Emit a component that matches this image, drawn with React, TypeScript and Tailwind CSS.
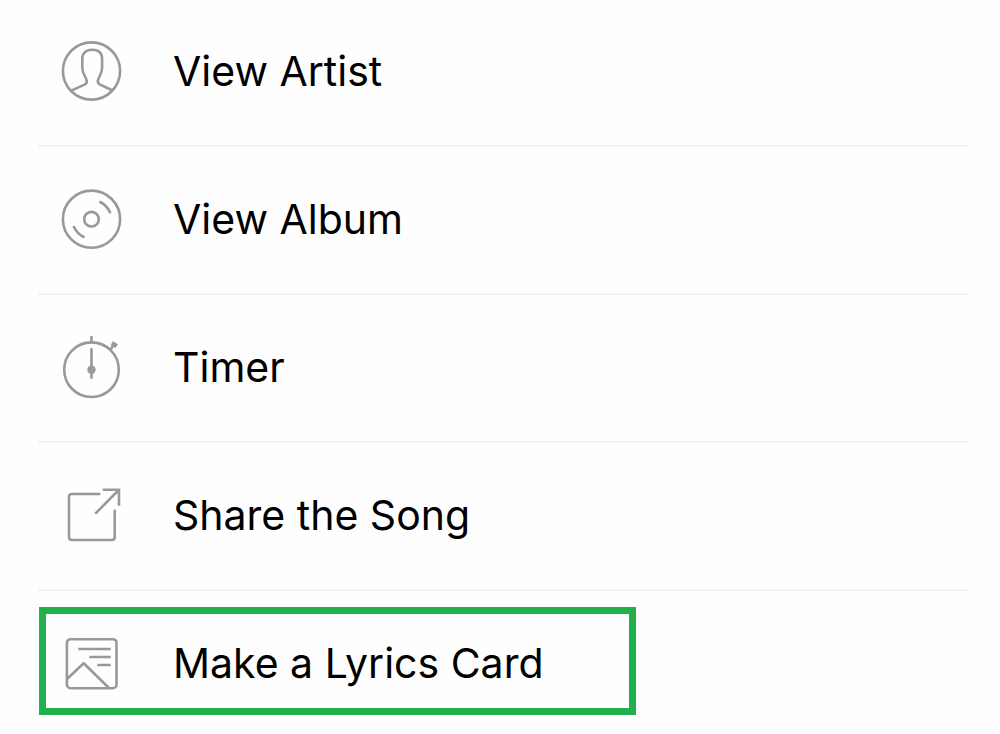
import type { ReactNode } from "react";
import { clsx } from "clsx";

interface MenuItem {
  label: string;
  icon: ReactNode;
  highlighted?: boolean;
}

const menuItems: MenuItem[] = [
  {
    label: "View Artist",
    icon: (
      <>
        <circle cx="31.5" cy="32" r="28.6" />
        <path d="M11.8 51.4 25 45.4Q27.4 44.2 26.6 41.4C25.8 37 22.6 35.4 22.3 29V20C22.3 14 26 10.7 32.2 10.7S42.1 14 42.1 20V29C41.8 35.4 38.8 37 38 41.4Q37.3 44.2 39.7 45.4L52 51.2" />
      </>
    ),
  },
  {
    label: "View Album",
    icon: (
      <>
        <circle cx="31.5" cy="32.2" r="28.6" />
        <circle cx="31.5" cy="32.2" r="7.3" />
        <path d="M40.3 15Q47 18.5 50 25.3M14 40Q17.2 46.8 23.6 50" />
      </>
    ),
  },
  {
    label: "Timer",
    icon: (
      <>
        <circle cx="31.5" cy="34.7" r="27.3" />
        <path d="M31.5 2V7M31.5 14.3V42.7M50.8 14.3 53 11" />
        <path d="M51.8 8.2 56.8 11.2" strokeWidth="4.4" strokeLinecap="butt" />
        <circle cx="31.5" cy="34.7" r="4.2" fill="currentColor" stroke="none" />
      </>
    ),
  },
  {
    label: "Share the Song",
    icon: (
      <>
        <path d="M39.3 11H12Q9 11 9 14V54Q9 57 12 57H51.7Q54.7 57 54.7 54V27.7" />
        <path d="M35.3 30.7 58.7 7M42.7 6.8H59V22.7" strokeLinejoin="miter" strokeLinecap="butt" />
      </>
    ),
  },
  {
    label: "Make a Lyrics Card",
    icon: (
      <>
        <rect x="6.9" y="8.2" width="49.6" height="49" rx="3.5" />
        <path d="M18.3 18H50.7M29.3 26H50.7M37.3 34H50.7M7.3 47.7 23.7 32.3 49 57" strokeLinecap="butt" />
      </>
    ),
    highlighted: true,
  },
];

function MenuRow({ label, icon, highlighted }: MenuItem) {
  return (
    <li className={clsx(highlighted ? "pt-4" : "border-b-2 border-[#f2f2f2]")}>
      <button
        type="button"
        className={clsx(
          "flex items-center gap-[49px] text-left",
          highlighted
            ? "ml-px h-[108px] w-[597px] max-w-full border-[7px] border-[#22b04c] pt-1 pl-[14px]"
            : "h-[146px] w-full pb-0.5 pl-[22px]",
        )}
      >
        <svg
          viewBox="0 0 64 64"
          className="size-16 shrink-0 text-[#999999]"
          fill="none"
          stroke="currentColor"
          strokeWidth="2.6"
          strokeLinecap="round"
          strokeLinejoin="round"
          aria-hidden="true"
        >
          {icon}
        </svg>
        <span>{label}</span>
      </button>
    </li>
  );
}

export default function App() {
  return (
    <main className="flow-root min-h-screen bg-[#fefefe] pr-8 pl-[38px] font-['Inter',sans-serif] text-[41px] leading-none text-black">
      <ul className="-mt-px">
        {menuItems.map((item) => (
          <MenuRow key={item.label} {...item} />
        ))}
      </ul>
    </main>
  );
}
